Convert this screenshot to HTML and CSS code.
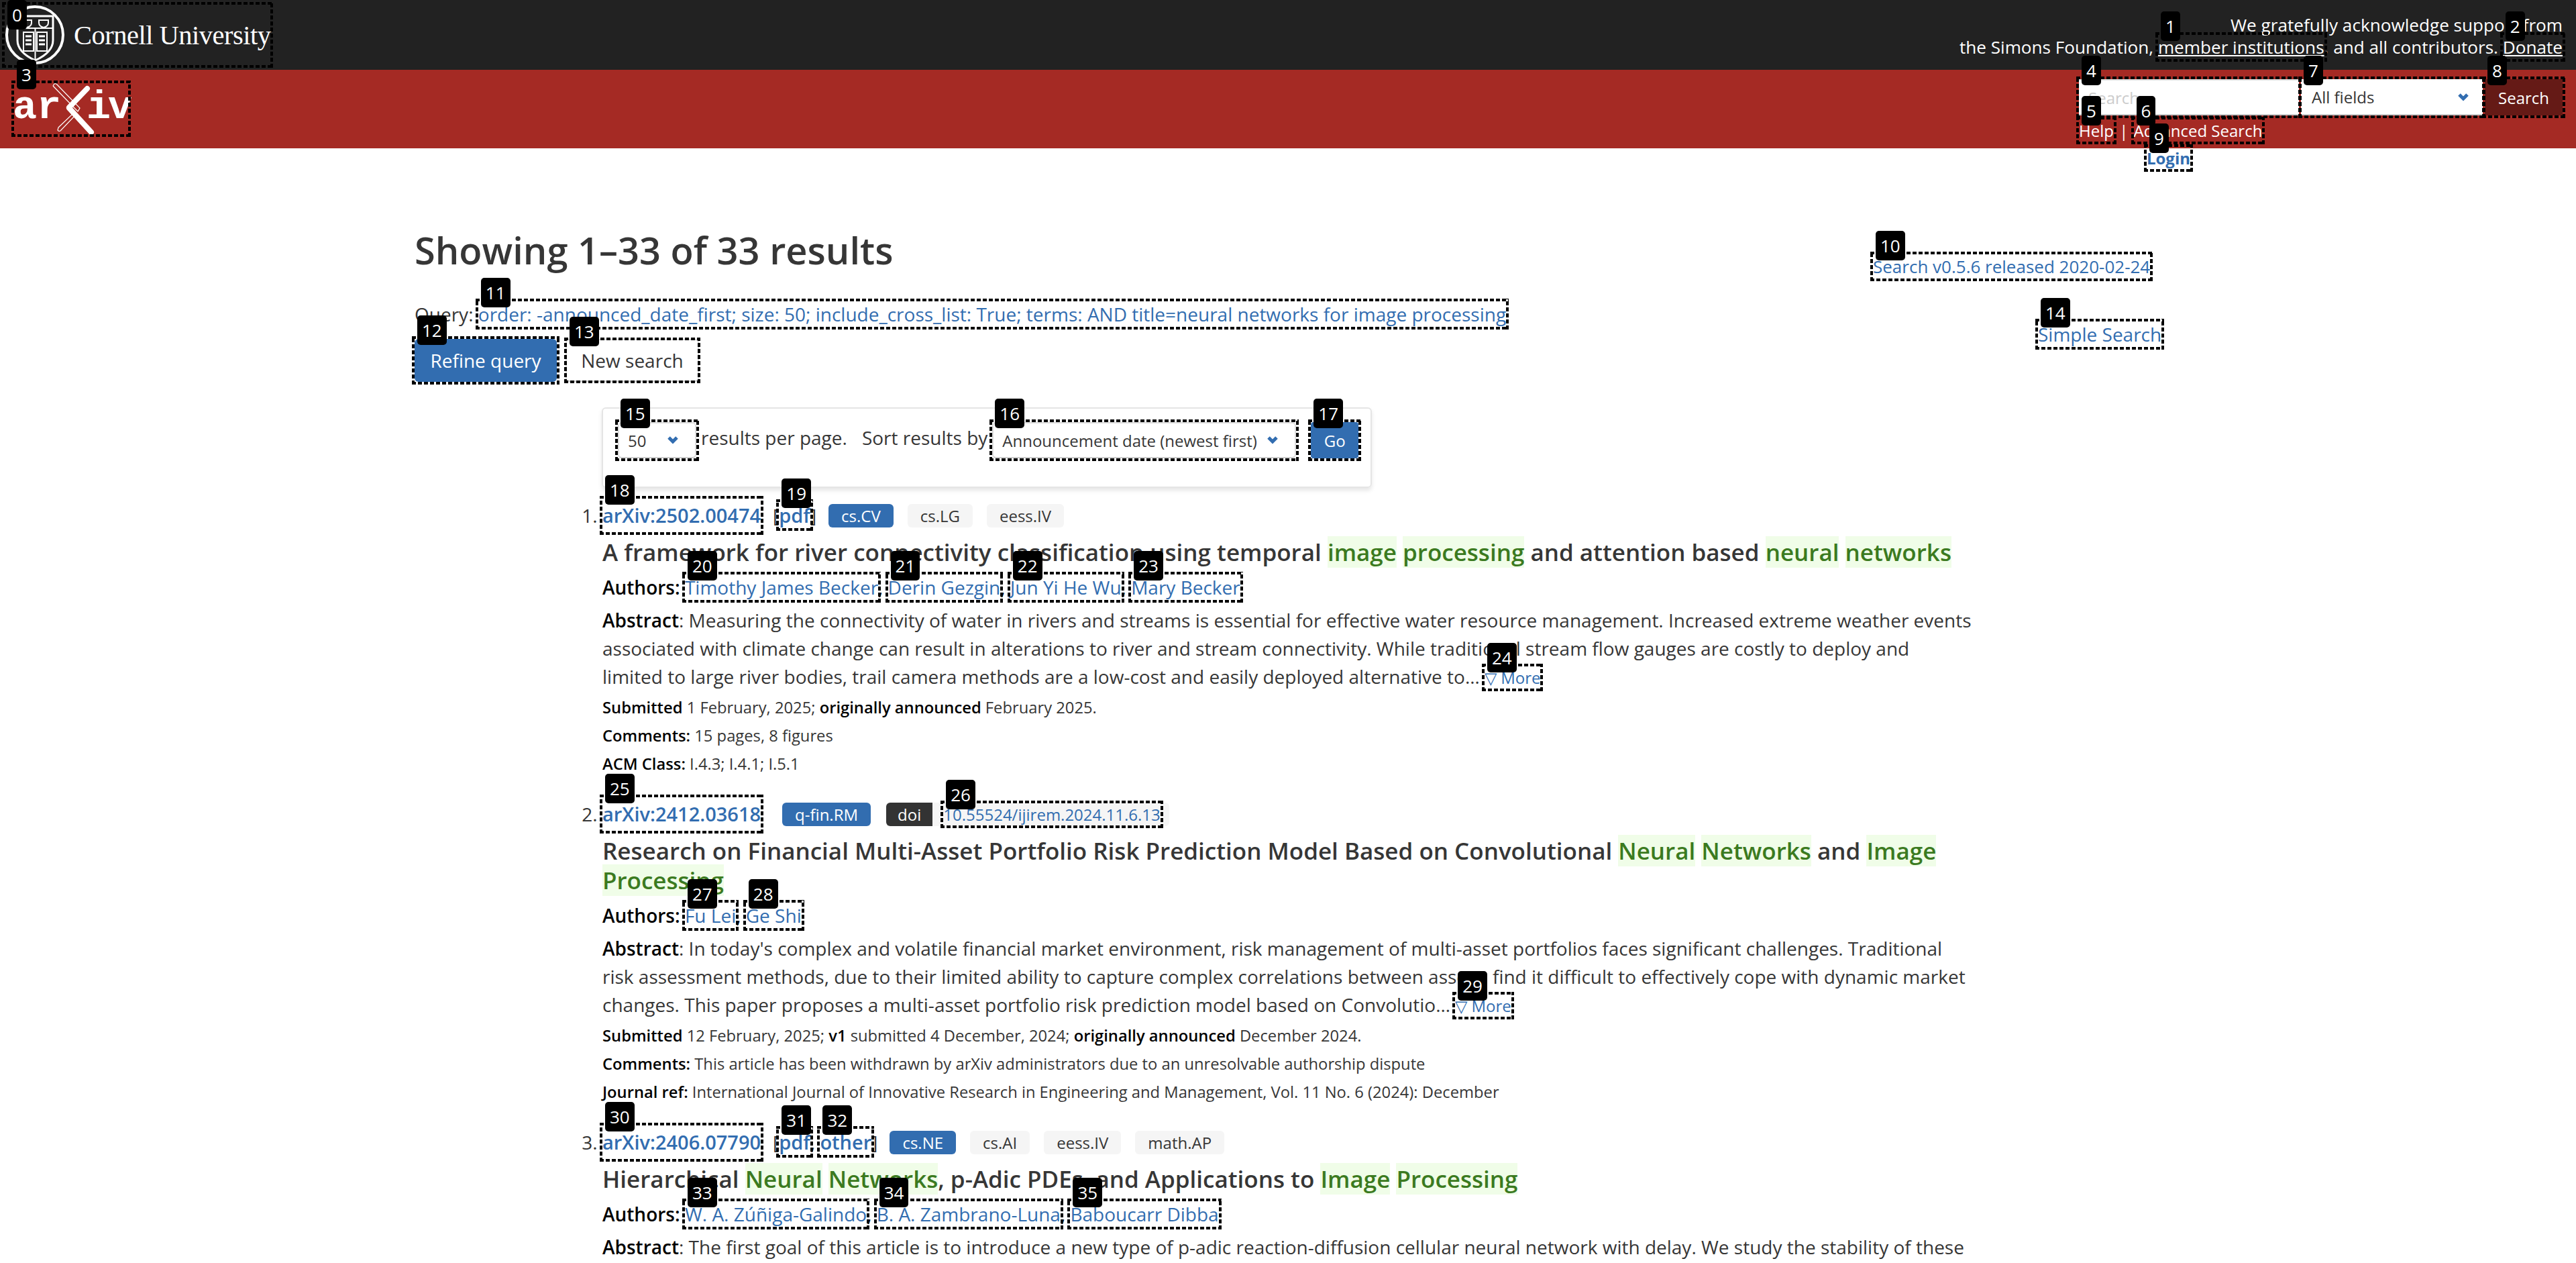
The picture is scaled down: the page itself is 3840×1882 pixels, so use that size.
FILE: index.html
```html
<!DOCTYPE html>
<html>

  <head>

    <title>Search | arXiv e-print repository</title>

    <link rel="stylesheet" href="styles.css">

  </head>

  <body>

    <div class="support-bar">
      <a class="mark cornell">
        <span class="badge badge-top">0</span>
        <svg class="seal" width="96" height="96" viewBox="0 0 96 96">
          <circle cx="48" cy="48" r="42" fill="none" stroke="#fff" stroke-width="4"/>
          <path d="M22 20H75V56Q75 74 48.500 86Q22 74 22 56Z" fill="none" stroke="#fff" stroke-width="3"/>
          <path d="M22 38H75M48.500 38V86" stroke="#fff" stroke-width="2"/>
          <path d="M29 26H43V30Q43 35 36 37Q29 35 29 30ZM54 26H68V30Q68 35 61 37Q54 35 54 30Z" fill="none" stroke="#fff" stroke-width="2"/>
          <path d="M31 44H46V72H31ZM51 44H66V72H51Z" fill="#222" stroke="#fff" stroke-width="2"/>
          <path d="M34 50H43M34 56H43M34 62H43M54 50H63M54 56H63M54 62H63" stroke="#fff" stroke-width="3"/>
        </svg>
        <span class="cornell-name">Cornell University</span>
      </a>
      <div class="support-text">
        We gratefully acknowledge support from<br>
        the Simons Foundation,
        <a class="mark support-link"><span class="badge">1</span>member institutions</a>,
        and all contributors.
        <a class="mark support-link"><span class="badge">2</span>Donate</a>
      </div>
    </div>

    <div class="brand-bar">
      <a class="mark arxiv-logo">
        <span class="badge">3</span>
        <svg class="logo-art" width="170" height="76" viewBox="0 0 170 76">
          <text class="logo-letters" x="-2" y="52">ar</text>
          <text class="logo-letters logo-letters-tight" x="108" y="52">iv</text>
          <path d="M109 8L82 36M82 37L115 73" stroke="#fff" stroke-width="8" stroke-linecap="round" fill="none"/>
          <path d="M58 4L60 1Q62 0 64 2L98 37L95 42L90 37M66 66L88 45L91 48L69 71Q66 72 65 70Z" stroke="#fff" stroke-width="1.200" fill="none"/>
          <path d="M58 4L90 37" stroke="#fff" stroke-width="1.200" fill="none"/>
        </svg>
      </a>
      <div class="search-tools">
        <div class="search-row">
          <span class="mark field">
            <span class="badge">4</span>
            <input class="search-input" type="text" placeholder="Search...">
          </span>
          <span class="mark field">
            <span class="badge">7</span>
            <select class="search-select"><option>All fields</option></select>
            <svg class="chevron chevron-header" viewBox="0 0 18 13"><path d="M3 3L9 9L15 3" fill="none" stroke="#326db0" stroke-width="5"/></svg>
          </span>
          <span class="mark field">
            <span class="badge">8</span>
            <button class="search-button">Search</button>
          </span>
        </div>
        <div class="search-links">
          <a class="mark"><span class="badge">5</span>Help</a> <span class="pipe">|</span>
          <a class="mark"><span class="badge">6</span>Advanced Search</a>
        </div>
      </div>
    </div>

    <div class="login-row">
      <a class="mark login"><span class="badge">9</span>Login</a>
    </div>

    <div class="content">

      <div class="head-row">
        <div class="head-main">
          <h1 class="title">Showing 1–33 of 33 results</h1>
          <div class="query-line">
            Query: <a class="mark link"><span class="badge">11</span>order: -announced_date_first; size: 50; include_cross_list: True; terms: AND title=neural networks for image processing</a>
          </div>
          <div class="query-buttons">
            <a class="mark btn btn-blue"><span class="badge">12</span>Refine query</a>
            <a class="mark btn btn-white"><span class="badge">13</span>New search</a>
          </div>
        </div>
        <div class="head-side">
          <div class="version"><a class="mark link"><span class="badge">10</span>Search v0.5.6 released 2020-02-24</a></div>
          <div class="simple"><a class="mark link"><span class="badge">14</span>Simple Search</a></div>
        </div>
      </div>

      <div class="sort-box">
        <span class="mark field">
          <span class="badge">15</span>
          <select class="sort-select size-select"><option>50</option></select>
          <svg class="chevron chevron-size" viewBox="0 0 18 13"><path d="M3 3L9 9L15 3" fill="none" stroke="#326db0" stroke-width="5"/></svg>
        </span>
        <span class="sort-label">results per page.</span>
        <span class="sort-label sort-by">Sort results by</span>
        <span class="mark field">
          <span class="badge">16</span>
          <select class="sort-select order-select"><option>Announcement date (newest first)</option></select>
          <svg class="chevron chevron-order" viewBox="0 0 18 13"><path d="M3 3L9 9L15 3" fill="none" stroke="#326db0" stroke-width="5"/></svg>
        </span>
        <span class="mark field go-field">
          <span class="badge">17</span>
          <button class="go-button">Go</button>
        </span>
      </div>

      <ol class="results">

        <li class="result">
          <div class="result-head">
            <a class="mark link id-link"><span class="badge">18</span>arXiv:2502.00474</a>
            <span class="files">[<a class="mark link"><span class="badge">19</span>pdf</a>]</span>
            <span class="tag tag-blue">cs.CV</span>
            <span class="tag">cs.LG</span>
            <span class="tag">eess.IV</span>
          </div>
          <div class="result-title">A framework for river connectivity classification using temporal <span class="hit">image</span> <span class="hit">processing</span> and attention based <span class="hit">neural</span> <span class="hit">networks</span></div>
          <div class="authors"><b>Authors:</b>
            <a class="mark link"><span class="badge">20</span>Timothy James Becker</a>,
            <a class="mark link"><span class="badge">21</span>Derin Gezgin</a>,
            <a class="mark link"><span class="badge">22</span>Jun Yi He Wu</a>,
            <a class="mark link"><span class="badge">23</span>Mary Becker</a>
          </div>
          <div class="abstract"><b>Abstract</b>: Measuring the connectivity of water in rivers and streams is essential for effective water resource management. Increased extreme weather events associated with climate change can result in alterations to river and stream connectivity. While traditional stream flow gauges are costly to deploy and limited to large river bodies, trail camera methods are a low-cost and easily deployed alternative to&hellip; <a class="mark link more"><span class="badge">24</span>▽ More</a></div>
          <div class="meta meta-first"><b>Submitted</b> 1 February, 2025; <b>originally announced</b> February 2025.</div>
          <div class="meta"><b>Comments:</b> 15 pages, 8 figures</div>
          <div class="meta"><b>ACM Class:</b> I.4.3; I.4.1; I.5.1</div>
        </li>

        <li class="result">
          <div class="result-head">
            <a class="mark link id-link"><span class="badge">25</span>arXiv:2412.03618</a>
            <span class="tag tag-blue tag-first">q-fin.RM</span>
            <span class="tag-pair">
              <span class="tag tag-dark">doi</span><span class="tag tag-doi"><a class="mark link"><span class="badge">26</span>10.55524/ijirem.2024.11.6.13</a></span>
            </span>
          </div>
          <div class="result-title">Research on Financial Multi-Asset Portfolio Risk Prediction Model Based on Convolutional <span class="hit">Neural</span> <span class="hit">Networks</span> and <span class="hit">Image</span> <span class="hit">Processing</span></div>
          <div class="authors"><b>Authors:</b>
            <a class="mark link"><span class="badge">27</span>Fu Lei</a>,
            <a class="mark link"><span class="badge">28</span>Ge Shi</a>
          </div>
          <div class="abstract"><b>Abstract</b>: In today's complex and volatile financial market environment, risk management of multi-asset portfolios faces significant challenges. Traditional risk assessment methods, due to their limited ability to capture complex correlations between assets, find it difficult to effectively cope with dynamic market changes. This paper proposes a multi-asset portfolio risk prediction model based on Convolutio&hellip; <a class="mark link more"><span class="badge">29</span>▽ More</a></div>
          <div class="meta meta-first"><b>Submitted</b> 12 February, 2025; <b>v1</b> submitted 4 December, 2024; <b>originally announced</b> December 2024.</div>
          <div class="meta"><b>Comments:</b> This article has been withdrawn by arXiv administrators due to an unresolvable authorship dispute</div>
          <div class="meta"><b>Journal ref:</b> International Journal of Innovative Research in Engineering and Management, Vol. 11 No. 6 (2024): December</div>
        </li>

        <li class="result">
          <div class="result-head">
            <a class="mark link id-link"><span class="badge">30</span>arXiv:2406.07790</a>
            <span class="files">[<a class="mark link"><span class="badge">31</span>pdf</a>, <a class="mark link"><span class="badge">32</span>other</a>]</span>
            <span class="tag tag-blue">cs.NE</span>
            <span class="tag">cs.AI</span>
            <span class="tag">eess.IV</span>
            <span class="tag">math.AP</span>
          </div>
          <div class="result-title">Hierarchical <span class="hit">Neural</span> <span class="hit">Networks</span>, p-Adic PDEs, and Applications to <span class="hit">Image</span> <span class="hit">Processing</span></div>
          <div class="authors"><b>Authors:</b>
            <a class="mark link"><span class="badge">33</span>W. A. Zúñiga-Galindo</a>,
            <a class="mark link"><span class="badge">34</span>B. A. Zambrano-Luna</a>,
            <a class="mark link"><span class="badge">35</span>Baboucarr Dibba</a>
          </div>
          <div class="abstract"><b>Abstract</b>: The first goal of this article is to introduce a new type of p-adic reaction-diffusion cellular neural network with delay. We study the stability of these</div>
        </li>

      </ol>

    </div>

  </body>

</html>
```
FILE: styles.css
```css
html, body {
    margin: 0;
    padding: 0;
    height: 1882px;
    overflow: hidden;
}

body {
    font-family: "Open Sans", sans-serif;
    font-size: 27px;
    color: #363636;
    background-color: white;
}

/* numbered dashed boxes over the page */
.mark {
    position: relative;
}

.mark::after {
    content: "";
    position: absolute;
    top: -4px;
    right: -4px;
    bottom: -4px;
    left: -4px;
    pointer-events: none;
    z-index: 5;
    background:
        repeating-linear-gradient(90deg, #000 0 6px, transparent 6px 9px) top / 100% 4px no-repeat,
        repeating-linear-gradient(90deg, #000 0 6px, transparent 6px 9px) bottom / 100% 4px no-repeat,
        repeating-linear-gradient(0deg, #000 0 6px, transparent 6px 9px) left / 4px 100% no-repeat,
        repeating-linear-gradient(0deg, #000 0 6px, transparent 6px 9px) right / 4px 100% no-repeat;
}

.badge {
    position: absolute;
    top: -35px;
    left: 4px;
    z-index: 6;
    height: 44px;
    padding: 0 7px;
    border-radius: 5px;
    background-color: black;
    color: white;
    font-family: "Open Sans", sans-serif;
    font-size: 26px;
    font-weight: 400;
    line-height: 44px;
    white-space: nowrap;
}

.badge-top {
    top: -7px;
}

/* top bars */
.support-bar {
    height: 104px;
    box-sizing: border-box;
    padding: 7px 20px 0 7px;
    display: flex;
    justify-content: space-between;
    background-color: #222222;
    color: white;
}

.cornell {
    display: flex;
    align-items: center;
    width: 396px;
    height: 90px;
}

.seal {
    flex: none;
    margin-left: -3px;
}

.cornell-name {
    margin-left: 10px;
    font-family: "Liberation Serif", serif;
    font-size: 40.500px;
    letter-spacing: -0.5px;
    white-space: nowrap;
}

.support-text {
    padding-top: 14px;
    font-size: 26.150px;
    line-height: 33px;
    text-align: right;
}

.support-link {
    color: white;
    text-decoration: underline;
}

.brand-bar {
    height: 117px;
    box-sizing: border-box;
    padding: 20px 20px 0 21px;
    display: flex;
    justify-content: space-between;
    align-items: flex-start;
    background-color: #a52a24;
}

.arxiv-logo {
    display: block;
    width: 170px;
    height: 76px;
}

.logo-art {
    display: block;
    overflow: visible;
}

.logo-letters {
    font-family: "Liberation Mono", monospace;
    font-size: 60px;
    font-weight: 700;
    fill: white;
}

.logo-letters-tight {
    letter-spacing: -4px;
}

.search-tools {
    margin-top: -6px;
}

.search-row {
    display: flex;
    gap: 3px;
}

.field {
    display: inline-flex;
    flex: none;
}

.search-input {
    box-sizing: border-box;
    width: 328px;
    height: 54px;
    padding: 0 14px;
    border: 0;
    border-top: 2px solid #dddddd;
    border-bottom: 2px solid #cccccc;
    background-color: white;
    font-family: inherit;
    font-size: 24px;
}

.search-input::placeholder {
    color: #cccccc;
}

.search-select {
    box-sizing: border-box;
    width: 271px;
    height: 54px;
    padding: 0 16px;
    border: 0;
    border-bottom: 2px solid #cccccc;
    border-radius: 0;
    appearance: none;
    background-color: white;
    color: #363636;
    font-family: inherit;
    font-size: 24px;
}

.search-button {
    width: 116px;
    height: 54px;
    border: 0;
    background-color: #651a16;
    color: white;
    font-family: inherit;
    font-size: 24px;
}

.chevron {
    position: absolute;
    width: 18px;
    height: 13px;
    pointer-events: none;
}

.chevron-header {
    top: 20px;
    right: 20px;
}

.search-links {
    margin-top: 6px;
    color: white;
    font-size: 24px;
    line-height: 33px;
}

.pipe {
    margin: 0 2px;
}

.login-row {
    height: 37px;
    padding: 0 575px 0 0;
    text-align: right;
    line-height: 28px;
}

.login {
    color: #326db0;
    font-size: 24px;
    font-weight: 700;
}

/* head of the page */
.content {
    padding-left: 618px;
    width: 2330px;
}

.link {
    color: #326db0;
}

.head-row {
    display: flex;
    width: 2610px;
}

.head-main {
    width: 2174px;
}

.title {
    margin: 78px 0 0 0;
    font-size: 56px;
    font-weight: 600;
    line-height: 72px;
}

.query-line {
    margin-top: 39px;
    font-size: 28px;
    line-height: 42px;
}

.query-buttons {
    margin-top: 16px;
    display: flex;
    gap: 13px;
}

.btn {
    box-sizing: border-box;
    height: 64px;
    display: flex;
    align-items: center;
    justify-content: center;
    border-radius: 6px;
    font-size: 28px;
}

.btn-blue {
    width: 212px;
    background-color: #326db0;
    color: white;
}

.btn-white {
    width: 199px;
    border: 2px solid #dddddd;
    border-bottom-color: #cccccc;
}

.head-side {
    padding-top: 122px;
    font-size: 26px;
    line-height: 34px;
    white-space: nowrap;
}

.simple {
    margin-top: 67px;
    padding-left: 246px;
    font-size: 28px;
}

/* sort box */
.sort-box {
    box-sizing: border-box;
    width: 1148px;
    height: 120px;
    margin: 38px 0 0 279px;
    padding: 20px 22px 0 22px;
    display: flex;
    align-items: flex-start;
    border: 2px solid #e5e5e5;
    border-radius: 6px;
    box-shadow: 0 4px 6px rgba(0, 0, 0, 0.1);
    font-size: 28px;
}

.sort-select {
    box-sizing: border-box;
    height: 54px;
    padding: 0 13px;
    border: 2px solid #dddddd;
    border-bottom-color: #cccccc;
    border-radius: 6px;
    appearance: none;
    background-color: white;
    color: #363636;
    font-family: inherit;
    font-size: 24px;
}

.size-select {
    width: 117px;
}

.order-select {
    width: 453px;
}

.chevron-size {
    top: 20px;
    right: 26px;
}

.chevron-order {
    top: 20px;
    right: 26px;
}

.sort-label {
    margin-left: 7px;
    line-height: 46px;
    white-space: nowrap;
}

.sort-by {
    margin-left: 22px;
    margin-right: 7px;
}

.go-field {
    margin-left: 22px;
}

.go-button {
    width: 71px;
    height: 54px;
    border: 0;
    border-radius: 4px;
    background-color: #326db0;
    color: white;
    font-family: inherit;
    font-size: 24px;
}

/* results list */
.results {
    margin: 16px 0 0 0;
    padding: 0 0 0 280px;
    width: 2042px;
}

.result {
    margin-bottom: 29px;
    font-size: 28px;
}

.result-head {
    display: flex;
    align-items: center;
    height: 50px;
    line-height: 50px;
    white-space: nowrap;
}

.id-link,
.files a {
    font-size: 29px;
    font-weight: 600;
}

.files {
    margin-left: 18px;
    margin-right: 18px;
    font-size: 28px;
}

.tag {
    height: 35px;
    margin-right: 21px;
    padding: 0 19px;
    border-radius: 6px;
    background-color: #f5f5f5;
    font-size: 24px;
    line-height: 35px;
}

.tag-first {
    margin-left: 32px;
}

.tag-blue {
    background-color: #326db0;
    color: white;
}

.tag-pair {
    display: flex;
    margin-left: 2px;
}

.tag-dark {
    margin-right: 0;
    padding: 0 17px;
    border-radius: 6px 0 0 6px;
    background-color: #333333;
    color: white;
}

.tag-doi {
    margin-right: 0;
    padding: 0 13px 0 16px;
    border-radius: 0 6px 6px 0;
}

.result-title {
    margin-top: 8px;
    font-size: 35px;
    font-weight: 600;
    line-height: 44px;
}

.hit {
    background-color: #f0fde8;
    color: #3b7a20;
}

.authors {
    margin-top: 9px;
    color: #000;
    line-height: 42px;
}

.abstract {
    margin-top: 7px;
    font-size: 28px;
    line-height: 42px;
}

.abstract b,
.authors b,
.meta b {
    color: black;
    font-weight: 600;
}

.more {
    font-size: 24px;
}

.meta {
    font-size: 23.750px;
    line-height: 42px;
}

.meta-first {
    margin-top: 2px;
}
```
